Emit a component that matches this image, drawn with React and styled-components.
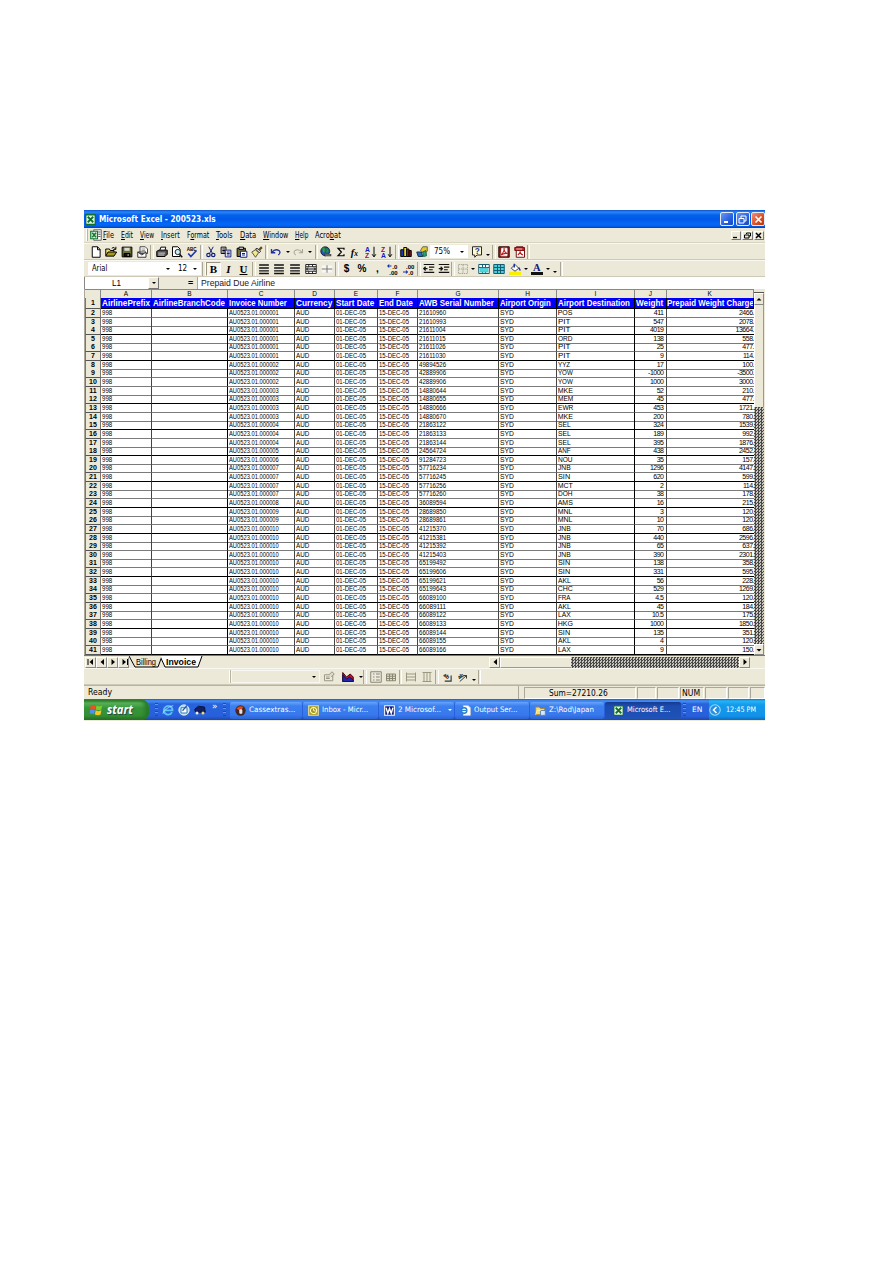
import React, { useLayoutEffect, useRef } from 'react';
import styled, { createGlobalStyle } from 'styled-components';

const Global = createGlobalStyle`
  * { box-sizing: border-box; }
  html, body { margin: 0; background: #fff; }
  body { font-family: "Liberation Sans", Arial, sans-serif; color: #000; }
`;

const face = '#ece9d8';

/* Text squeezed or stretched to a given advance width */
const FitBox = styled.span`
  display: block; flex: none; width: ${p => p.$w}px; white-space: pre;
`;
const FitInner = styled.span`display: inline-block; transform-origin: 0 50%;`;
function Fit({ w, children }) {
  const ref = useRef(null);
  useLayoutEffect(() => {
    ref.current.style.transform = `scaleX(${w / ref.current.offsetWidth})`;
  });
  return <FitBox $w={w}><FitInner ref={ref}>{children}</FitInner></FitBox>;
}

const Page = styled.main`height: 1263px; padding: 210px 128px 0 84px; background: #fff;`;
const Window = styled.section`width: 681px; height: 511px; display: flex; flex-direction: column; background: ${face}; overflow: hidden;`;

const TitleBar = styled.header`
  height: 18px; flex: none; display: flex; align-items: center; gap: 3px; padding: 0 0 0 1px; color: #fff;
  font: bold 9px/17px "DejaVu Sans", sans-serif;
  background: linear-gradient(#0a50c8 0, #2a86f8 2px, #0562ee 5px, #0058e6 9px, #0468f8 14px, #0560ee 16px, #0040b8 18px);
`;
const Spacer = styled.div`flex: 1;`;
const CaptionButton = styled.button`
  width: 14px; height: 14px; flex: none; padding: 0; border: 1px solid #e4ecfc; border-radius: 2px; display: flex; align-items: center; justify-content: center;
  margin-left: -1.5px; background: ${p => (p.$close ? 'linear-gradient(135deg,#f09078,#dc4c20 60%,#b83408)' : 'linear-gradient(135deg,#6a98f4,#2860e0 60%,#1848c0)')};
`;

const MenuBar = styled.nav`height: 15px; flex: none; display: flex; align-items: center; padding-left: 2px; font: 8px/13px "DejaVu Sans Condensed", "DejaVu Sans", sans-serif; border-bottom: 1px solid #d8d4c2;`;
const Grip = styled.span`width: 2px; height: ${p => p.$h || 12}px; border-left: 1px solid #fff; border-right: 1px solid #b8b4a0; flex: none;`;
const MenuItem = styled.span`margin-right: 7px;`;
const DocButtons = styled.div`display: flex; gap: 1px; margin-left: auto; padding-right: 1px;`;
const DocButton = styled.button`width: 10.5px; height: 9px; padding: 0; border: 1px solid #fff; border-right-color: #777; border-bottom-color: #777; background: ${face}; display: flex; align-items: center; justify-content: center;`;

const ToolBar = styled.div`height: 17px; flex: none; display: flex; align-items: center; padding-left: ${p => p.$left ?? 4}px; border-top: 1px solid #f8f7f0; border-bottom: 1px solid #cdc9b6;`;
const Slot = styled.span`width: ${p => p.$w}px; height: 14px; flex: none; display: flex; align-items: center; justify-content: center; font: 10px/14px "Liberation Sans", sans-serif;`;
const Pressed = styled(Slot)`background: #f6f5ee; border: 1px solid #fff; border-top-color: #999480; border-left-color: #999480; font-family: "Liberation Serif", serif; font-size: 11px;`;
const Divider = styled.span`width: ${p => p.$w}px; height: 14px; flex: none; display: flex; justify-content: center; &::before { content: ""; width: 2px; border-left: 1px solid #aaa692; border-right: 1px solid #fff; }`;
const Combo = styled.span`
  width: ${p => p.$w}px; height: 13px; flex: none; display: flex; align-items: center; justify-content: space-between; padding: 0 3px;
  background: ${p => p.$bg || '#fff'}; font: 8px/12px "DejaVu Sans Condensed", sans-serif; border: 1px solid ${p => (p.$bg ? '#f8f7f2' : '#fff')};
`;
const Caret = styled.i`width: 0; height: 0; border: 2px solid transparent; border-top-color: #000; border-bottom: 0; flex: none; margin-top: ${p => (p.$low ? 7 : 0)}px;`;
const Svg = styled.svg`display: block; flex: none;`;

const FormulaBar = styled.div`height: 12px; flex: none; display: flex; background: #fff; font: 9px/12px "Liberation Sans", sans-serif;`;
const NameBox = styled.div`width: 64px; padding-left: 27px; border-left: 1px solid #888;`;
const NameArrow = styled.div`width: 11px; background: ${face}; border: 1px solid #fff; border-right-color: #777; border-bottom-color: #777; display: flex; align-items: center; justify-content: center;`;
const EqualArea = styled.div`width: 39px; background: ${face}; border-right: 1px solid #aca899; font-weight: bold; padding-left: 29px;`;
const FormulaText = styled.div`padding-left: 3px; color: #222;`;

const SheetArea = styled.div`height: 366px; flex: none; display: flex; overflow: hidden;`;
const Grid = styled.div`width: 670px; flex: none; overflow: hidden; background: #fff; border-left: 1px solid #aca899;`;
const Cols = '16px 51px 76px 67px 40px 43px 40px 81px 58px 78px 31.5px 87.5px';
const HeadRow = styled.div`display: grid; grid-template-columns: ${Cols}; height: 9px; background: ${face}; border-top: 1px solid #8c8878; font: 6.5px/8px "Liberation Sans", sans-serif; text-align: center;`;
const HeadCell = styled.div`border-right: 1px solid #888; border-bottom: 1px solid #888;`;
const TitleRow = styled.div`display: grid; grid-template-columns: ${Cols}; height: 10.9px; font: bold 8.5px/11px "Liberation Sans", sans-serif;`;
const TitleCell = styled.div`background: #0000f8; color: #fff; border-right: 1px solid #000; border-bottom: 1px solid #000; padding-left: .7px; overflow: hidden;`;
const Row = styled.div`display: grid; grid-template-columns: ${Cols}; height: 8.654px; font: 7px/8px "Liberation Sans", sans-serif;`;
const Cell = styled.div`
  min-width: 0; padding: 0 ${p => (p.$last ? 0 : 2)}px 0 .7px; white-space: nowrap; overflow: hidden; text-align: ${p => (p.$num ? 'right' : 'left')};
  letter-spacing: ${p => (p.$num ? '-0.5px' : '0')};
  border-right: ${p => (p.$last ? 0 : 1)}px solid ${p => (p.$dark ? '#000' : '#444')}; border-bottom: 1px solid ${p => (p.$strong ? '#000' : '#7b7b7b')};
`;
const RowHead = styled.div`background: ${face}; font: bold 7px/8px "Liberation Sans", sans-serif; text-align: center; border: 1px solid #fff; border-width: 0 1px 1px 0; border-right-color: #777; border-bottom-color: #555; border-left: 1px solid #777; ${p => p.$tall && 'padding-top: 1px;'}`;

const dither = 'repeating-conic-gradient(#484848 0 25%, #c8c6bc 0 50%) 0 0 / 3px 3px';
const VScroll = styled.div`width: 10px; display: flex; flex-direction: column; background: ${face};`;
const Split = styled.div`height: 4px; border-bottom: 1px solid #555;`;
const ScrollButton = styled.div`
  width: ${p => p.$w || 10}px; height: ${p => p.$h || 11}px; flex: none; display: flex; align-items: center; justify-content: center;
  background: ${face}; border: 1px solid #fff; border-right-color: #888; border-bottom-color: #888;
`;
const VThumb = styled.div`height: 102px; border-right: 1px solid #999; border-left: 1px solid #fff;`;
const Dither = styled.div`background: ${dither}; ${p => (p.$w ? `width: ${p.$w}px; height: 11px;` : 'flex: 1;')}`;

const TabRow = styled.div`height: 13px; flex: none; display: flex; align-items: center; border-top: 1px solid #777; padding-left: 1px;`;
const Tabs = styled.div`width: 360px; height: 12px; display: flex; flex: none; font: 9px/12px "Liberation Sans", sans-serif;`;
const TabShape = styled.div`position: relative; width: ${p => p.$w}px; height: 11px; padding-left: ${p => p.$pad}px; font-weight: ${p => (p.$on ? 'bold' : 'normal')};`;
const TabBack = styled.svg`position: absolute; inset: 0;`;
const TabLabel = styled.div`position: relative;`;
const HThumb = styled.div`width: 71px; height: 11px; border: 1px solid #fff; border-right: 0; border-bottom-color: #999;`;

const StatusBar = styled.div`height: 14px; flex: none; display: flex; align-items: center; gap: 1px; font: 9px/12px "DejaVu Sans", sans-serif; border-top: 1px solid #b8b4a4;`;
const Ready = styled.div`width: 435px; padding-left: 4px; height: 13px; border-right: 1px solid #aca899;`;
const Panel = styled.div`width: ${p => p.$w}px; height: 12px; padding-left: ${p => p.$pad || 0}px; border: 1px solid #aca899; border-right-color: #fff; border-bottom-color: #fff; line-height: 11px;`;

const TaskBar = styled.footer`height: 21px; flex: none; display: flex; align-items: center; color: #fff; font: 7.5px/12px "DejaVu Sans", sans-serif; background: linear-gradient(#2458c8 0, #4490f4 2px, #2862dc 5px, #2860dc 17px, #1c48ac 21px);`;
const Start = styled.div`width: 65px; height: 20px; padding-left: 6px; display: flex; align-items: center; gap: 4px; border-radius: 0 7px 7px 0; background: linear-gradient(#2c7a2c, #58b458 3px, #389438 8px, #349034 16px, #246824); box-shadow: inset -4px 0 4px #287828; font: italic bold 12px/18px "Open Sans", sans-serif; text-shadow: 1px 1px 1px #244;`;
const Dots = styled.span`width: 3px; height: 13px; margin: 0 ${p => p.$r ?? 3}px 0 ${p => p.$l ?? 4}px; background: repeating-linear-gradient(#184cb4 0 1px, #5c94f4 1px 2px, #2860dc 2px 4px);`;
const Quick = styled.div`width: 60px; display: flex; align-items: center; gap: 4px;`;
const Chevron = styled.span`margin: -7px 0 0 2px; font-size: 9px;`;
const Task = styled.div`width: ${p => p.$w}px; height: 17px; margin: 1px 1px 0 0; padding-left: ${p => p.$pad || 6}px; display: flex; align-items: center; gap: 3px; border-radius: 2px; background: ${p => (p.$on ? 'linear-gradient(#143c90,#1c4cb0 4px,#2052b8)' : 'linear-gradient(#68a4fc,#3c80f0 4px,#3878ec 13px,#2c64d4)')};`;
const Lang = styled.div`width: 17px; padding-left: 2px;`;
const Tray = styled.div`width: 56px; height: 21px; flex: none; display: flex; align-items: center; gap: 5px; background: linear-gradient(#1274d0 0, #24b4f4 2px, #129aec 6px, #1292e8 17px, #0c6cc0); margin-left: auto;`;

const P = (d, fill = 'none', stroke = '#000', sw = 1.3) => <path d={d} fill={fill} stroke={stroke} strokeWidth={sw} />;
const sorter = (a, b) => (
  <>
    <text x="0" y="7.5" fontSize="9" fontWeight="bold" fill={a === 'A' ? '#1020c0' : '#a01020'}>{a}</text>
    <text x="0" y="15.5" fontSize="9" fontWeight="bold" fill={b === 'A' ? '#1020c0' : '#a01020'}>{b}</text>
    {P('M12 1V14M9.5 11L12 14.5L14.5 11')}
  </>
);
const decimals = (a, b, arrow) => (
  <>
    <text x={a === '.0' ? 7 : 4} y="7.5" fontSize="8" fontWeight="bold">{a}</text>
    <text x={b === '.0' ? 7 : 3} y="15.5" fontSize="8" fontWeight="bold">{b}</text>
    {P(arrow, 'none', '#1030b0', 1.4)}
  </>
);
const drawings = {
  excel: <>{P('M1 1H15V15H1Z', '#e8f4e4', '#107030', 2)}{P('M4 4L12 12M12 4L4 12', 'none', '#107030', 2.6)}</>,
  exceldoc: <>{P('M5 1H15V15H5Z', '#fff', '#666')}{P('M11 4H14M11 7H14M11 10H14', 'none', '#555')}{P('M1 3H10V13H1Z', '#e4f4e4', '#107830', 1.6)}{P('M3 5L8 11M8 5L3 11', 'none', '#107830', 2)}</>,
  new: P('M3 1H10L13.5 4.5V15H3ZM10 1V5H13.5', '#fff'),
  open: <>{P('M1 13V4H6L7 6H12V8', '#f0e080')}{P('M1 13.5L4 8H15.5L12 13.5Z', '#a89818')}{P('M9 3Q12 0 14 4M14.5 1V4.5H11')}</>,
  save: <>{P('M1.5 1.5H14.5V14.5H1.5Z', '#687030')}{P('M4 2H12V7H4Z', '#dcdccc', '#444', .8)}{P('M4 10H12V14H4Z', '#111')}{P('M9.5 11V13', 'none', '#fff')}</>,
  mail: <>{P('M4 1H11L14 4V10H4Z', '#fff', '#444')}{P('M1 8H12V15H1ZL6.5 12L12 8', '#fff', '#333')}{P('M6 4H11M6 6H11', 'none', '#777', 1)}</>,
  print: <>{P('M5 6L6.5 1.5H13L12 6', '#fff')}{P('M1 7L4 5.5H15V11L12 14H1Z', '#555')}{P('M3 9.5H12M3 12H11', 'none', '#ddd', 1.2)}</>,
  preview: <>{P('M2 1H9L12 4V14H2Z', '#fff')}<circle cx="9" cy="8" r="3.5" fill="#c8eef0" stroke="#222" strokeWidth="1.3" />{P('M11.5 11L15 15', 'none', '#111', 2)}</>,
  spell: <><text x="1" y="6" fontSize="6" fontWeight="bold">ABC</text>{P('M3 10L6.5 14L14 6', 'none', '#2038b0', 2.2)}</>,
  cut: <>{P('M5 1L10 10M11 1L6 10', 'none', '#102070')}<circle cx="4.6" cy="12" r="2.3" fill="none" stroke="#102080" strokeWidth="1.6" /><circle cx="11" cy="12" r="2.3" fill="none" stroke="#102080" strokeWidth="1.6" /></>,
  copy: <>{P('M1.5 1.5H8V10H1.5ZM3 4H7M3 6H7M3 8H7', '#fff')}{P('M7 5.5H14.5V14.5H7ZM9 8H13M9 10H13M9 12H13', '#fff', '#102078')}</>,
  paste: <>{P('M1.5 3H12.5V14H1.5Z', '#787030')}{P('M4 1.5H10V4.5H4Z', '#ddd')}{P('M6 7H14.5V15H6ZM8 10H12M8 12H12', '#fff', '#102078')}</>,
  painter: <>{P('M1 8L6 5L10 9L6 15Z', '#f4e888', '#554')}{P('M6 4L11 9L13 7L8 3Z', '#ddd', '#333')}{P('M11 5L14.5 1.5', 'none', '#604818', 3)}</>,
  undo: P('M2 4V9H7M2.5 8.5Q7 3 12 6Q15 9 11 12', 'none', '#2030a0', 1.8),
  redo: P('M14 4V9H9M13.5 8.5Q9 3 4 6Q1 9 5 12', 'none', '#aaa898', 1.4),
  globe: <><circle cx="7" cy="7" r="6" fill="#2050b8" stroke="#112" />{P('M3 3Q7 1 7 5T4 9M9 3L12 7L9 9Z', '#30a050', '#208040')}{P('M6 12H10M10 12H15', 'none', '#333', 3)}{P('M7 12H14', 'none', '#bbb', 1)}</>,
  sum: P('M12 5V3H4L8.5 8L4 13H12V11', 'none', '#000', 1.6),
  fx: <text x="1" y="13" fontSize="14" fontStyle="italic" fontWeight="bold" fontFamily="Liberation Serif">f<tspan fontSize="10">x</tspan></text>,
  az: sorter('A', 'Z'), za: sorter('Z', 'A'),
  chart: <>{P('M1 5H5V14H1Z', '#1838b8')}{P('M5 2H9V14H5Z', '#e8d820')}{P('M9 4H12V14H9Z', '#d02020')}{P('M12 6H15V14H12Z', '#701818')}</>,
  draw: <>{P('M6 6L9 1H15V7L11 10Z', '#e8c820', '#665')}{P('M1 8H7L9 14H3Z', '#2868c8', '#134')}{P('M9 8L13 6L14 13L10 14Z', '#30a070', '#165')}</>,
  help: <>{P('M2 1H14V12H8L5 15V12H2Z', '#fffbd0', '#222')}<text x="5" y="10.5" fontSize="11" fontWeight="bold" fill="#1838a0">?</text></>,
  pdf: <>{P('M1 1H15V15H1Z', '#8c1818', '#301010')}{P('M5 3H12V13H4Z', '#fff', '#eee')}{P('M4 12Q9 7 8 3Q8 9 13 10Q8 9 4 12', 'none', '#c01818', 1.5)}</>,
  pdfmail: <>{P('M3 1H12L14 4V15H3Z', '#fff', '#611')}{P('M1 2H14V6H1Z', '#c02020', '#801010')}{P('M3 4H11', 'none', '#fff', 1)}{P('M5 12Q9 9 8 7Q8 11 12 12', 'none', '#c01818', 1.4)}</>,
  left: P('M1.5 2.7H14.5M1.5 6.6H14.5M1.5 10.5H14.5M1.5 14H14.5', 'none', '#111', 1.9),
  merge: <>{P('M1 2H15V14H1ZM1 5H15M1 11H15M5 2V5M10 2V5M5 11V14M10 11V14', '#fff', '#222')}{P('M2 8H14M4 6L2 8L4 10M12 6L14 8L12 10')}</>,
  cross: <>{P('M1 3H15V13H1Z', '#f8f7f2', '#eee')}{P('M1 8H15M8 3V13', 'none', '#777')}</>,
  inc: decimals('.0', '.00', 'M1 4H6M3 2L1 4L3 6'),
  dec: decimals('.00', '.0', 'M0 12H6M4 10L6 12L4 14'),
  outdent: P('M1 2H15M8 5.5H15M8 9H13M1 12.5H15M6 7.5H1M3.5 5L1 7.5L3.5 10', 'none', '#111', 1.6),
  indent: P('M1 2H15M8 5.5H15M8 9H13M1 12.5H15M1 7.5H6M3.5 5L6 7.5L3.5 10', 'none', '#111', 1.6),
  border: <path d="M2 2H14V14H2ZM8 2V14M2 8H14" fill="none" stroke="#aaa898" strokeWidth="1.4" strokeDasharray="2 1" />,
  tablea: <>{P('M1 2H15V14H1ZM1 6H15M6 2V14M10 2V14', '#fff', '#125870')}{P('M3 7H13V12H3Z', '#50d8e0', '#40c8d0')}</>,
  tableb: <>{P('M1 2H15V14H1Z', '#48d0dc', '#125870')}{P('M1 6H15M1 10H15M6 2V14M10 2V14', 'none', '#125870')}</>,
  fill: <>{P('M3 7L8 2L13 7L8 11Z', '#fff', '#444')}{P('M7 6V1M13 6L15 10', 'none', '#1838a0', 2)}{P('M0 12H16V16H0Z', '#f8f000', '#f8f000', 0)}</>,
  fontcolor: <><text x="2.5" y="11" fontSize="14" fontWeight="bold" fontFamily="Liberation Serif" fill="#102080">A</text>{P('M0 12H16V16H0Z', '#111', '#111', 0)}</>,
  props: <>{P('M2 5H13V13H2ZM4 8H9M4 10H9', '#eceadf', '#999584')}{P('M8 5L12 1L15 4L11 8', '#ddd9c8', '#999584')}</>,
  area: <>{P('M1 14V2L6 8L11 4L15 8V14Z', '#b81838', '#400')}{P('M1 14V5L6 11L10 8L15 12V14Z', '#2028a8', '#115')}</>,
  legend: P('M1 1H15V15H1ZM4 4H6M8 4H13M4 8H6M8 8H13M4 12H6M8 12H13', '#eceadf', '#88846f'),
  table: P('M2 4H14V13H2ZM2 7H14M2 10H14M6 4V13M10 4V13', '#e0ddcf', '#88846f'),
  rows: P('M2 2V14M14 2V14M2 4H14M2 8H14M2 12H14', '#e7e4d6', '#99957f'),
  cols: P('M2 2H14M2 14H14M4 2V14M8 2V14M12 2V14', '#e7e4d6', '#99957f'),
  angle: <><g transform="rotate(35 7 7)"><text x="3" y="9" fontSize="7" fontWeight="bold">ab</text></g>{P('M5 13.5H13.5V6', 'none', '#333', 1.5)}</>,
  angleup: <><g transform="rotate(-35 7 8)"><text x="3" y="9" fontSize="7" fontWeight="bold">ab</text></g>{P('M5 14L14 6M14 10V6H10', 'none', '#333')}</>,
  flag: <>{P('M1 3Q4 1 7 3L6 8Q3 6 0 8Z', '#f05020', '#f05020', 0)}{P('M8 3Q11 5 15 3L14 8Q11 10 7 8Z', '#80c830', '#80c830', 0)}{P('M0 9Q3 7 6 9L5 14Q2 12 -1 14Z', '#5090f0', '#5090f0', 0)}{P('M7 9Q10 11 14 9L13 14Q10 16 6 14Z', '#f8c820', '#f8c820', 0)}</>,
  ie: <>{P('M13.5 11Q11 15 6.5 14Q1 12 3 6Q6 1 11 3Q14 5 14 8.5H4', 'none', '#58c4f8', 2.4)}{P('M1 13Q3 6 15 2', 'none', '#b8e8fc', 1)}</>,
  desktop: <><circle cx="8" cy="8" r="7" fill="#b8dcf8" stroke="#e8f6ff" />{P('M4 5H12V12H4Z', '#fff', '#3878b0')}{P('M6 9L12 2', 'none', '#2060a0', 1.6)}</>,
  car: <>{P('M1 7L6 3L14 4L15 11H2Z', '#102060', '#0a1440')}<circle cx="4" cy="12" r="2" fill="#eee" /><circle cx="12" cy="12" r="2" fill="#e8d880" /></>,
  cass: <><circle cx="8" cy="8" r="7.5" fill="#442828" /><path d="M2 5Q7 0 12 3L8 9Z" fill="#e04828" />{P('M7 7H10V12H7Z', '#ddd', '#eee')}</>,
  inbox: <>{P('M1 1H15V15H1Z', '#a89818', '#e8e098', 1.6)}<circle cx="8" cy="8" r="4.5" fill="none" stroke="#fffbc8" strokeWidth="1.5" />{P('M8 5V8L11 9', 'none', '#fff')}</>,
  word: <>{P('M1 1H15V15H1Z', '#101e80', '#fff', 1.6)}{P('M3 4L5.5 12L8 5L10.5 12L13 4', 'none', '#fff', 2)}</>,
  output: <>{P('M5 1H12L15 4V15H5Z', '#fff', '#ccc')}<circle cx="6" cy="8" r="4" fill="#e4f4ff" stroke="#2880d0" strokeWidth="2" />{P('M3 8H9', 'none', '#2880d0', 1.5)}</>,
  folder: <>{P('M1 14V3H6L8 5H14V14Z', '#f8dc70', '#b08820')}{P('M8 8H15V15H8Z', '#d8e8f8', '#5880b0')}{P('M1 14L3 8H8', 'none', '#fff4b0')}</>,
  back: <><circle cx="8" cy="8" r="7" fill="#2890e0" stroke="#9cdcff" strokeWidth="1.4" />{P('M10 4L6 8L10 12', 'none', '#fff', 2)}</>,
};
function Icon({ name, size = 12 }) {
  return <Svg width={size} height={size} viewBox="0 0 16 16" fontFamily="Liberation Sans">{drawings[name]}</Svg>;
}
const Tri = ({ dir, bar }) => {
  const d = { left: 'M6 1V7L2.5 4Z', right: 'M2.5 1V7L6 4Z', up: 'M1.5 5.5H6.5L4 3Z', down: 'M1.5 3H6.5L4 5.5Z' }[dir];
  return <Svg width="8" height="8" viewBox="0 0 8 8"><path d={d} />{bar && <path d={bar === 'l' ? 'M1 1V7' : 'M7.5 1V7'} stroke="#000" />}</Svg>;
};

function Tools({ items }) {
  return items.map(([kind, w, arg], i) => {
    if (kind === '|') return <Divider key={i} $w={w} />;
    if (kind === 'v') return <Slot key={i} $w={w}><Caret $low={arg} /></Slot>;
    if (kind === 't') return <Slot key={i} $w={w}>{arg}</Slot>;
    return <Slot key={i} $w={w}><Icon name={kind} /></Slot>;
  });
}
const SerifMark = styled.b`font-family: "Liberation Serif", serif; font-size: 11px;`;
const standardA = [['new', 15], ['open', 16], ['save', 16], ['mail', 15], ['|', 4], ['print', 15], ['preview', 15], ['spell', 16], ['|', 3], ['cut', 15], ['copy', 16], ['paste', 15], ['painter', 16], ['|', 3], ['undo', 16], ['v', 7], ['redo', 14], ['v', 10], ['|', 3], ['globe', 15], ['sum', 16], ['fx', 14], ['az', 16], ['za', 16], ['|', 4], ['chart', 14], ['draw', 17]];
const standardB = [['help', 17], ['v', 6, true], ['|', 5], ['pdf', 16], ['pdfmail', 15], ['|', 3]];
const formatting = [['t', 15, <SerifMark><i>I</i></SerifMark>], ['t', 15, <SerifMark><u>U</u></SerifMark>], ['|', 5], ['left', 15], ['left', 16], ['left', 16], ['merge', 15], ['cross', 17], ['|', 4], ['t', 15, <b>$</b>], ['t', 16, <b>%</b>], ['t', 15, <b>,</b>], ['inc', 16], ['dec', 16], ['|', 4], ['outdent', 15], ['indent', 15], ['|', 4], ['border', 15], ['v', 6], ['tablea', 15], ['tableb', 16], ['fill', 15], ['v', 7], ['fontcolor', 16], ['v', 5], ['v', 10, true], ['|', 3]];
const charting = [['props', 17], ['area', 22], ['v', 3], ['|', 6], ['legend', 15], ['table', 16], ['|', 3], ['rows', 17], ['cols', 15], ['|', 6], ['angle', 14], ['angleup', 15], ['v', 9, true], ['|', 3]];

const menus = [['F', 'ile', 11], ['E', 'dit', 12], ['V', 'iew', 14], ['I', 'nsert', 19], ['', 'Format', 22, 1], ['T', 'ools', 17], ['D', 'ata', 16], ['W', 'indow', 25], ['H', 'elp', 13], ['', 'Acrobat', 26, 4]];
const titles = [['AirlinePrefix', 48], ['AirlineBranchCode', 72], ['Invoice Number', 58], ['Currency', 36], ['Start Date', 38], ['End Date', 34], ['AWB Serial Number', 75], ['Airport Origin', 51], ['Airport Destination', 72], ['Weight', 27], ['Prepaid Weight Charge', 86.5]];
const data = `1 21610960 POS 411 2466|1 21610993 PIT 547 2078|1 21611004 PIT 4019 13664|1 21611015 ORD 138 558|1 21611026 PIT 25 477|1 21611030 PIT 9 114|2 49894526 YYZ 17 100|2 42889906 YOW -1000 -3500|2 42889906 YOW 1000 3000|3 14880644 MKE 52 210|3 14880655 MEM 45 477|3 14880666 EWR 453 1721|3 14880670 MKE 200 780|4 21863122 SEL 324 1539|4 21863133 SEL 189 992|4 21863144 SEL 395 1876|5 24564724 ANF 438 2452|6 91284723 NOU 35 157|7 57716234 JNB 1296 4147|7 57716245 SIN 620 599|7 57716256 MCT 2 114|7 57716260 DOH 38 178|8 36089594 AMS 16 215|9 28689850 MNL 3 120|9 28689861 MNL 10 120|10 41215370 JNB 70 686|10 41215381 JNB 440 2596|10 41215392 JNB 65 637|10 41215403 JNB 390 2301|10 65199492 SIN 138 358|10 65199606 SIN 331 595|10 65199621 AKL 56 228|10 65199643 CHC 529 1269|10 66089100 FRA 4.5 120|10 66089111 AKL 45 184|10 66089122 LAX 10.5 175|10 66089133 HKG 1000 1850|10 66089144 SIN 135 351|10 66089155 AKL 4 120|10 66089166 LAX 9 150`.split('|').map(r => r.split(' '));
const strongRows = new Set([4, 7, 12, 15, 18, 21, 24, 27, 32, 35, 38, 41]);

function DataRow({ n, values: [inv, serial, dest, weight, charge] }) {
  const s = strongRows.has(n);
  return (
    <Row>
      <RowHead>{n}</RowHead>
      <Cell $strong={s}><Fit w={10.5}>998</Fit></Cell>
      <Cell $strong={s} $dark />
      <Cell $strong={s}><Fit w={49.5}>{`AU0523.01.${inv.padStart(6, '0')}`}</Fit></Cell>
      <Cell $strong={s}><Fit w={13.5}>AUD</Fit></Cell>
      <Cell $strong={s}><Fit w={30}>01-DEC-05</Fit></Cell>
      <Cell $strong={s}><Fit w={30}>15-DEC-05</Fit></Cell>
      <Cell $strong={s}><Fit w={27}>{serial}</Fit></Cell>
      <Cell $strong={s}><Fit w={13.5}>SYD</Fit></Cell>
      <Cell $strong={s} $dark><Fit w={/[MOHW]/.test(dest) ? 15 : 12.5}>{dest}</Fit></Cell>
      <Cell $strong={s} $num>{weight}</Cell>
      <Cell $strong={s} $num $last>{charge}.</Cell>
    </Row>
  );
}

const tasks = [['cass', 'Cassextras...', 72, 46], ['inbox', 'Inbox - Micr...', 75, 46], ['word', '2 Microsof...', 75, 43, true], ['output', 'Output Ser...', 74, 43], ['folder', 'Z:\\Rod\\Japan', 74, 45], ['excel', 'Microsoft E...', 76, 43]];

export default function App() {
  return (
    <Page>
      <Global />
      <Window>
        <TitleBar>
          <Icon name="excel" size={11} />
          <Fit w={117}>Microsoft Excel - 200523.xls</Fit>
          <Spacer />
          <CaptionButton><Svg width="9" height="9"><path d="M1 7H5" stroke="#fff" strokeWidth="2" /></Svg></CaptionButton>
          <CaptionButton><Svg width="9" height="9"><path d="M3 3V1H8V6H6M1 3.5H6V8H1Z" stroke="#fff" fill="none" /></Svg></CaptionButton>
          <CaptionButton $close><Svg width="9" height="9"><path d="M1.5 1.5L7.5 7.5M7.5 1.5L1.5 7.5" stroke="#fff" strokeWidth="1.6" /></Svg></CaptionButton>
        </TitleBar>

        <MenuBar>
          <Grip /><Slot $w={15}><Icon name="exceldoc" /></Slot>
          {menus.map(([u, rest, w, at]) => (
            <MenuItem key={rest}><Fit w={w}>{u ? <><u>{u}</u>{rest}</> : at === 1 ? <>F<u>o</u>rmat</> : <>Acro<u>b</u>at</>}</Fit></MenuItem>
          ))}
          <DocButtons>
            <DocButton><Svg width="7" height="7"><path d="M1 5.5H5" stroke="#000" strokeWidth="1.3" /></Svg></DocButton>
            <DocButton><Svg width="7" height="7"><path d="M2.5 2V1H6.5V4H5M.5 3H5V6H.5Z" stroke="#000" fill="none" /></Svg></DocButton>
            <DocButton><Svg width="7" height="7"><path d="M1 1L6 6M6 1L1 6" stroke="#000" strokeWidth="1.5" /></Svg></DocButton>
          </DocButtons>
        </MenuBar>

        <ToolBar>
          <Tools items={standardA} />
          <Combo $w={38}><Fit w={16}>75%</Fit><Caret /></Combo>
          <Tools items={standardB} />
        </ToolBar>
        <ToolBar>
          <Combo $w={86}><Fit w={15}>Arial</Fit><Caret /></Combo>
          <Combo $w={27}><Fit w={9}>12</Fit><Caret /></Combo>
          <Divider $w={5} />
          <Pressed $w={15}><b>B</b></Pressed>
          <Tools items={formatting} />
        </ToolBar>

        <FormulaBar>
          <NameBox><Fit w={9}>L1</Fit></NameBox>
          <NameArrow><Caret /></NameArrow>
          <EqualArea>=</EqualArea>
          <FormulaText><Fit w={74}>Prepaid Due Airline</Fit></FormulaText>
        </FormulaBar>

        <SheetArea>
          <Grid>
            <HeadRow><HeadCell />{'ABCDEFGHIJK'.split('').map(c => <HeadCell key={c}>{c}</HeadCell>)}</HeadRow>
            <TitleRow>
              <RowHead $tall>1</RowHead>
              {titles.map(([t, w]) => <TitleCell key={t}><Fit w={w}>{t}</Fit></TitleCell>)}
            </TitleRow>
            {data.map((v, i) => <DataRow key={i} n={i + 2} values={v} />)}
          </Grid>
          <VScroll>
            <Split />
            <ScrollButton $h={12}><Tri dir="up" /></ScrollButton>
            <VThumb />
            <Dither />
            <ScrollButton $h={11}><Tri dir="down" /></ScrollButton>
          </VScroll>
        </SheetArea>

        <TabRow>
          {[['left', 'l'], ['left'], ['right'], ['right', 'r']].map(([d, b], i) => <ScrollButton key={i} $w={11}><Tri dir={d} bar={b} /></ScrollButton>)}
          <Tabs>
            <TabShape $w={32} $pad={7}>
              <TabBack width="34" height="12"><path d="M0 0L6 11H29L33 0" fill={face} stroke="#000" /></TabBack>
              <TabLabel><Fit w={20}>Billing</Fit></TabLabel>
            </TabShape>
            <TabShape $w={44} $pad={5} $on>
              <TabBack width="44" height="12"><path d="M-1 0L4 11H37L41 0" fill="#fff" stroke="#000" /></TabBack>
              <TabLabel><Fit w={30}>Invoice</Fit></TabLabel>
            </TabShape>
          </Tabs>
          <ScrollButton $w={11}><Tri dir="left" /></ScrollButton>
          <HThumb />
          <Dither $w={168} />
          <ScrollButton $w={11}><Tri dir="right" /></ScrollButton>
        </TabRow>

        <ToolBar $left={145}>
          <Grip $h={13} />
          <Combo $w={89} $bg={face}><Spacer /><Caret /></Combo>
          <Tools items={charting} />
        </ToolBar>

        <StatusBar>
          <Ready><Fit w={24}>Ready</Fit></Ready>
          <Spacer />
          <Panel $w={112} $pad={24}><Fit w={59}>Sum=27210.26</Fit></Panel>
          <Panel $w={19} /><Panel $w={22} />
          <Panel $w={24} $pad={1}><Fit w={18}>NUM</Fit></Panel>
          <Panel $w={22} /><Panel $w={21} /><Panel $w={15} />
        </StatusBar>

        <TaskBar>
          <Start><Icon name="flag" size={13} /><Fit w={26}>start</Fit></Start>
          <Dots $l={6} $r={4} />
          <Quick><Icon name="ie" /><Icon name="desktop" /><Icon name="car" /><Chevron>»</Chevron></Quick>
          <Dots $l={1} $r={4} />
          {tasks.map(([icon, label, w, tw, caret]) => (
            <Task key={icon} $w={w} $on={icon === 'excel'} $pad={icon === 'excel' ? 8 : 5}>
              <Icon name={icon} size={11} /><Fit w={tw}>{label}</Fit>{caret && <Slot $w={11}><Svg width="4" height="3"><path d="M0 0H4L2 2Z" fill="#fff" /></Svg></Slot>}
            </Task>
          ))}
          <Dots $l={1} $r={4} />
          <Lang><Fit w={10}>EN</Fit></Lang>
          <Tray><Icon name="back" /><Fit w={30}>12:45 PM</Fit></Tray>
        </TaskBar>
      </Window>
    </Page>
  );
}
